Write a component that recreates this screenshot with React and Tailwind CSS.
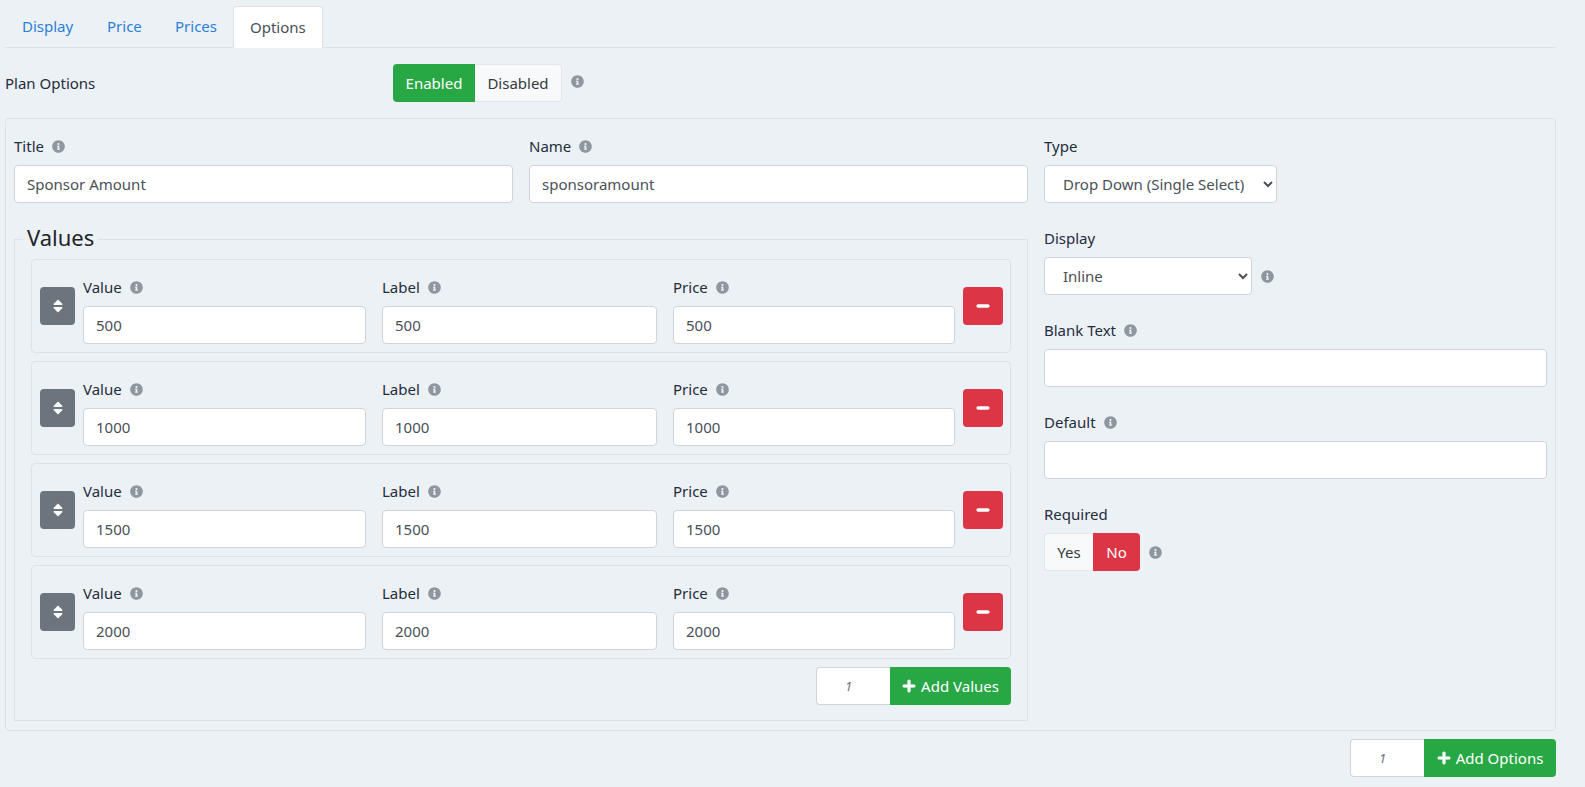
import { FaInfoCircle, FaSort, FaMinus, FaPlus } from 'react-icons/fa';

const inputCls = "block h-[38px] bg-white border border-[#ced4da] rounded px-3 text-[15px] text-[#495057] outline-none";

function Info({ className = "" }) {
    return <FaInfoCircle className={"text-[13px] text-[#8f979e] " + className} />;
}

function Label({ children, info }) {
    return (
        <label className="flex items-center h-6 mb-[7px] text-[15px] text-[#1f2d3d]">
            {children}
            {info && <Info className="ml-2" />}
        </label>
    );
}

function ValueRow({ amount }) {
    return (
        <div className="flex h-[94px] border border-[#dde2e8] rounded pl-2 pt-[15px]">
            <button className="flex items-center justify-center w-[35px] h-[38px] mt-3 bg-[#6c757d] rounded text-white text-[16px]">
                <FaSort />
            </button>
            <div className="w-[283px] ml-2">
                <Label info>Value</Label>
                <input className={inputCls + " w-full"} defaultValue={amount} />
            </div>
            <div className="w-[275px] ml-4">
                <Label info>Label</Label>
                <input className={inputCls + " w-full"} defaultValue={amount} />
            </div>
            <div className="w-[282px] ml-4">
                <Label info>Price</Label>
                <input className={inputCls + " w-full"} defaultValue={amount} />
            </div>
            <button className="flex items-center justify-center w-10 h-[38px] mt-3 ml-2 bg-[#dc3545] rounded text-white text-[14px]">
                <FaMinus className="stroke-current stroke-[30px]" />
            </button>
        </div>
    );
}

function AddGroup({ text, width }) {
    return (
        <div className="flex justify-end">
            <input className="w-[74px] h-[38px] bg-white border border-[#ced4da] border-r-0 rounded-l pl-[28px] text-[13px] italic text-[#6c757d] outline-none" defaultValue="1" />
            <button className={"flex items-center justify-center h-[38px] bg-[#28a745] rounded-r text-white text-[15px] " + width}>
                <FaPlus className="text-[14px] mr-[5px] stroke-current stroke-[20px]" />
                {text}
            </button>
        </div>
    );
}

export default function App() {
    return (
        <div className="min-h-screen bg-[#ecf1f5] pl-[5px] pr-[29px] pt-[6px] font-['Noto_Sans',sans-serif]">
            {/* tabs */}
            <div className="flex h-[42px] border-b border-[#dee2e6] text-[15px] pl-px">
                <a className="px-4 pt-[9px] w-[85px] text-[#2b7fd8]">Display</a>
                <a className="px-4 pt-[9px] w-[68px] text-[#2b7fd8]">Price</a>
                <a className="px-4 pt-[9px] w-[74px] text-[#2b7fd8]">Prices</a>
                <a className="px-4 pt-[9px] w-[90px] h-[42px] bg-white border border-[#dee2e6] border-b-0 rounded-t text-[#495057]">Options</a>
            </div>

            <div className="flex items-center h-[38px] mt-4">
                <span className="w-[388px] text-[15px] text-[#1f2d3d]">Plan Options</span>
                <div className="flex text-[15px]">
                    <button className="w-[82px] h-[38px] bg-[#28a745] text-white rounded-l">Enabled</button>
                    <button className="w-[87px] h-[38px] bg-[#f8f9fa] border border-[#e3e7eb] border-l-0 text-[#343a40] rounded-r">Disabled</button>
                </div>
                <Info className="ml-[9px] -mt-1" />
            </div>

            {/* option panel */}
            <div className="grid grid-cols-[1014px_503px] gap-x-4 mt-4 border border-[#dde2e8] rounded pl-2 pt-[15px] pb-2 h-[613px]">
                <div>
                    <div className="grid grid-cols-[499px_499px] gap-x-4">
                        <div>
                            <Label info>Title</Label>
                            <input className={inputCls + " w-full"} defaultValue="Sponsor Amount" />
                        </div>
                        <div>
                            <Label info>Name</Label>
                            <input className={inputCls + " w-full"} defaultValue="sponsoramount" />
                        </div>
                    </div>

                    <fieldset className="mt-[18px] border border-[#dde2e8] px-4 pb-[15px] pt-[2px]">
                        <legend className="-ml-2 px-1 pb-1 text-[22px] leading-8 text-[#212529]">Values</legend>
                        <div className="flex flex-col gap-2">
                            <ValueRow amount="500" />
                            <ValueRow amount="1000" />
                            <ValueRow amount="1500" />
                            <ValueRow amount="2000" />
                            <AddGroup text="Add Values" width="w-[121px]" />
                        </div>
                    </fieldset>
                </div>

                <div>
                    <Label>Type</Label>
                    <select className={inputCls + " w-[233px] pl-[14px]"} defaultValue="dd">
                        <option value="dd">Drop Down (Single Select)</option>
                    </select>

                    <div className="mt-[23px]">
                        <Label>Display</Label>
                        <div className="flex items-center">
                            <select className={inputCls + " w-[208px] pl-[14px]"} defaultValue="inline">
                                <option value="inline">Inline</option>
                            </select>
                            <Info className="ml-[9px]" />
                        </div>
                    </div>

                    <div className="mt-[23px]">
                        <Label info>Blank Text</Label>
                        <input className={inputCls + " w-full"} />
                    </div>

                    <div className="mt-[23px]">
                        <Label info>Default</Label>
                        <input className={inputCls + " w-full"} />
                    </div>

                    <div className="mt-[23px]">
                        <Label>Required</Label>
                        <div className="flex items-center">
                            <button className="w-[49px] h-[38px] bg-[#f8f9fa] border border-[#e3e7eb] border-r-0 rounded-l text-[15px] text-[#343a40]">Yes</button>
                            <button className="w-[47px] h-[38px] bg-[#dc3545] rounded-r text-[15px] text-white">No</button>
                            <Info className="ml-[9px]" />
                        </div>
                    </div>
                </div>
            </div>

            <div className="mt-2">
                <AddGroup text="Add Options" width="w-[132px]" />
            </div>
        </div>
    );
}
